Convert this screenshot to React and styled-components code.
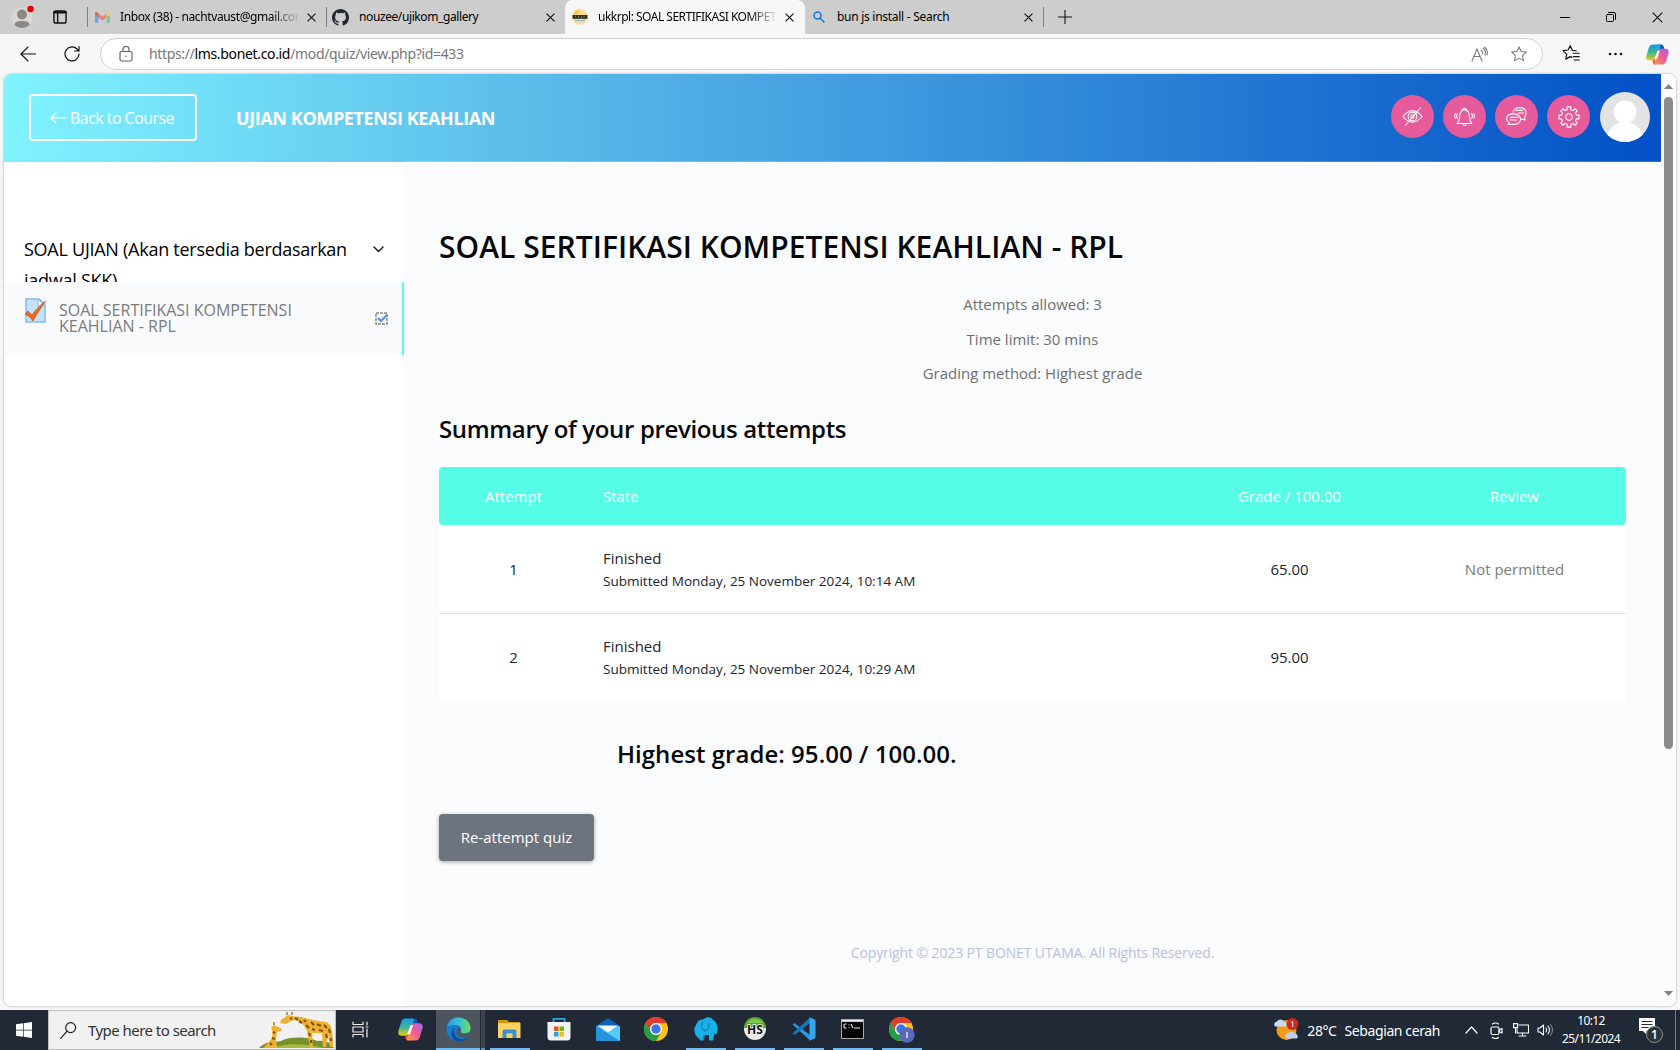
import React from "react";
import styled, { createGlobalStyle } from "styled-components";

const Global = createGlobalStyle`
  *{box-sizing:border-box}
  body{margin:0;background:#f7f7f7;overflow:hidden;font-family:"Open Sans","Noto Sans",sans-serif;color:#000}
  svg{display:block;flex:none}
`;
const ui = `"Noto Sans","Open Sans",sans-serif`;

const Screen = styled.div`width:1680px;height:1050px;display:flex;flex-direction:column;background:#f7f7f7;`;

/* Tab strip */
const TabStrip = styled.div`height:34px;flex:none;background:#cdcdcd;display:flex;align-items:stretch;font-family:${ui};`;
const StripTools = styled.div`width:87px;display:flex;align-items:center;padding-left:11px;gap:19px;`;
const Tab = styled.div`
  width:${p => p.$w}px;display:flex;align-items:center;padding:0 ${p => p.$pr}px 0 ${p => p.$pl}px;
  background:${p => (p.$active ? "#f7f7f7" : "transparent")};
  border-radius:${p => (p.$active ? "8px 8px 0 0" : "0")};
`;
const TabLabel = styled.div`
  flex:1;margin:0 7px 0 ${p => p.$gap || 10}px;font-size:12px;letter-spacing:${p => p.$ls || 0}px;white-space:nowrap;overflow:hidden;line-height:20px;
  mask-image:${p => (p.$fade ? "linear-gradient(90deg,#000 84%,transparent)" : "none")};
`;
const Divider = styled.div`width:1px;height:20px;margin-top:7px;background:#808080;flex:none;`;
const WindowControls = styled.div`margin-left:auto;display:flex;align-items:center;gap:36px;padding-right:17px;`;

/* Address bar */
const Toolbar = styled.div`height:40px;flex:none;display:flex;align-items:center;background:#f7f7f7;padding:0 11px 0 20px;`;
const NavIcons = styled.div`display:flex;align-items:center;gap:28px;width:80px;`;
const AddressBar = styled.div`
  width:1444px;height:32px;border:1px solid #d0d0d0;border-radius:16px;background:#fff;display:flex;align-items:center;padding:0 14px 0 18px;
`;
const Url = styled.div`margin-left:16px;flex:1;font-family:${ui};font-size:14px;line-height:22px;letter-spacing:${p => p.$ls}px;color:#767676;b{font-weight:400;color:#000}`;
const AddressIcons = styled.div`display:flex;gap:22px;align-items:center;`;
const BrowserIcons = styled.div`margin-left:19px;display:flex;align-items:center;flex:1;`;
const IconSlot = styled.div`margin-left:${p => p.$ml || 0}px;`;

/* Page */
const PageFrame = styled.div`
  margin:0 4px 4px;height:932px;flex:none;display:flex;border-radius:8px;overflow:hidden;background:#fff;box-shadow:0 0 3px rgba(0,0,0,.3);
`;
const Site = styled.div`width:1657px;display:flex;flex-direction:column;`;
const Header = styled.header`
  height:88px;flex:none;display:flex;align-items:center;padding:0 11px 0 25px;
  background:linear-gradient(90deg,#80f3ff 0%,#57b7e8 35%,#0250c5 100%);border-bottom:1px solid rgba(255,255,255,.2);
`;
const BackButton = styled.div`
  width:168px;height:47px;border:2px solid #fff;border-radius:4px;color:#fff;display:flex;align-items:center;padding-left:19px;gap:4px;
  font-size:16px;letter-spacing:-.54px;white-space:nowrap;
`;
const CourseName = styled.div`margin-left:39px;color:#fff;font-weight:700;font-size:18px;letter-spacing:${p => p.$ls}px;white-space:nowrap;`;
const HeaderIcons = styled.div`margin:0 0 2px auto;display:flex;gap:9px;align-items:center;`;
const Round = styled.div`width:43px;height:43px;border-radius:50%;background:#e55b9b;display:flex;align-items:center;justify-content:center;`;
const Avatar = styled.div`margin-left:1px;`;
const Columns = styled.div`flex:1;display:flex;min-height:0;`;
const Sidebar = styled.aside`width:400px;background:#fff;padding-top:72px;box-shadow:0 0 3px rgba(0,0,0,.12);`;
const SectionTitle = styled.div`height:48px;overflow:hidden;padding:0 20px;display:flex;justify-content:space-between;`;
const SectionText = styled.div`font-size:18px;line-height:31px;letter-spacing:${p => p.$ls}px;width:335px;`;
const ChevronBox = styled.div`height:31px;display:flex;align-items:center;`;
const Activity = styled.div`
  height:73px;background:#f9fafc;border-right:2px solid #55fde6;display:flex;padding:16px 14px 0 20px;
`;
const ActivityText = styled.div`margin:4px 0 0 11px;font-size:16px;line-height:16px;color:#7b7b7b;width:290px;letter-spacing:${p => p.$ls}px;`;
const CheckBox = styled.div`margin:14px 0 0 auto;`;

const Main = styled.main`flex:1;background:#f9fbfd;padding:67px 35px 0;display:flex;flex-direction:column;`;
const Title = styled.h1`margin:0;font-size:30px;line-height:36px;font-weight:600;letter-spacing:${p => p.$ls}px;color:#070709;white-space:nowrap;`;
const Info = styled.div`margin-top:22px;color:#707070;font-size:15px;text-align:center;letter-spacing:${p => p.$ls}px;`;
const InfoLine = styled.div`line-height:34.500px;`;
const Subtitle = styled.h2`
  margin:${p => p.$mt}px 0 0 ${p => p.$ml || 0}px;font-size:24px;line-height:32px;font-weight:600;letter-spacing:${p => p.$ls}px;color:#070709;white-space:nowrap;
`;
const Table = styled.div`margin-top:22px;color:#212529;font-size:15px;`;
const Row = styled.div`
  display:grid;grid-template-columns:149px 588px 227px 223px;align-items:center;background:#fff;height:${p => p.$h}px;
  border-top:${p => (p.$line ? "1px solid #dee2e6" : "0")};
`;
const HeadRow = styled(Row)`height:58px;background:#55fde6;color:#fff;border-radius:4px;`;
const Cell = styled.div`text-align:${p => (p.$left ? "left" : "center")};padding-left:${p => (p.$left ? 15 : 0)}px;color:${p => (p.$muted ? "#7b7b7b" : "inherit")};`;
const StateName = styled.div`line-height:23px;padding-top:2px;`;
const StateDate = styled.div`line-height:23px;font-size:13.500px;`;
const Retry = styled.div`
  margin-top:44px;width:155px;height:47px;border-radius:4px;background:#6c757d;color:#fff;font-size:15px;display:flex;align-items:center;justify-content:center;
  box-shadow:0 1px 4px rgba(0,0,0,.35);
`;
const Footer = styled.footer`margin-top:80px;text-align:center;font-size:14px;line-height:24px;color:#b9c0dd;letter-spacing:${p => p.$ls}px;`;
const ScrollTrack = styled.div`width:15px;background:#fcfcfc;display:flex;flex-direction:column;align-items:center;padding:10px 0 10px;`;
const Thumb = styled.div`width:9px;height:652px;border-radius:5px;background:#8b8b8b;margin:8px 0 auto;`;

/* Taskbar */
const Taskbar = styled.div`height:40px;flex:none;background:#212936;display:flex;align-items:stretch;font-family:${ui};color:#fff;`;
const Start = styled.div`width:48px;display:flex;align-items:center;justify-content:center;`;
const Search = styled.div`
  width:288px;background:#f1f1f1;border:1px solid #bdbdbd;color:#333;display:flex;align-items:center;padding-left:11px;font-size:15px;
`;
const SearchText = styled.div`margin-left:11px;flex:1;letter-spacing:${p => p.$ls}px;white-space:nowrap;`;
const TaskButton = styled.div`
  width:${p => p.$w || 49}px;display:flex;flex-direction:column;align-items:center;background:${p => (p.$active ? "#4d555f" : "transparent")};
`;
const TaskIcon = styled.div`flex:1;display:flex;align-items:center;justify-content:center;`;
const RunMark = styled.div`height:2px;width:${p => (p.$full ? "100%" : "40px")};background:${p => (p.$on ? "#76b9ed" : "transparent")};`;
const StackEdge = styled.div`width:4px;margin:0 0 0 1px;background:#3b434e;border-bottom:2px solid #5e93bd;`;
const Tray = styled.div`margin-left:auto;display:flex;align-items:center;`;
const Weather = styled.div`display:flex;align-items:center;gap:8px;font-size:14px;letter-spacing:${p => p.$ls}px;white-space:nowrap;margin-right:25px;`;
const TrayIcons = styled.div`display:flex;align-items:center;gap:10px;`;
const Clock = styled.div`width:64px;margin-left:6px;text-align:center;font-size:12px;line-height:18px;letter-spacing:${p => p.$ls}px;white-space:nowrap;`;
const Notice = styled.div`margin:0 12px 0 15px;`;
const Peek = styled.div`width:5px;height:40px;border-left:1px solid #79808a;`;

const X = ({ s = 9, w = 1.3 }) => (
  <svg width={s} height={s} viewBox="0 0 10 10"><path d="M.6.6l8.8 8.8M9.4.6L.6 9.4" stroke="#111" strokeWidth={w} /></svg>
);
const Line = ({ w = 18, h = w, vb = "0 0 24 24", c = "#222", sw = 1.5, children }) => (
  <svg width={w} height={h} viewBox={vb} fill="none" stroke={c} strokeWidth={sw} strokeLinecap="round" strokeLinejoin="round">{children}</svg>
);
const Profile = () => (
  <svg width="23" height="24" viewBox="0 0 23 24">
    <circle cx="11" cy="13" r="10.5" fill="#dad8d5" /><circle cx="11" cy="9.5" r="5" fill="#8b8886" />
    <path d="M3.5 20c0-3 2.500-4 7.500-4s7.500 1 7.500 4c-4 4-11 4-15 0z" fill="#8b8886" />
    <circle cx="19.500" cy="4" r="3.200" fill="#e60000" />
  </svg>
);
const Workspaces = () => (
  <Line w={14} vb="0 0 15 15" sw={1.5} c="#111"><rect x="1" y="1" width="13" height="13" rx="2" /><path d="M1.500 2.500h12" strokeWidth="2.500" /><path d="M5 4v10" /></Line>
);
const Gmail = () => (
  <svg width="15" height="11" viewBox="0 0 30 22">
    <path d="M0 3v17a2 2 0 0 0 2 2h5V9z" fill="#7aa3e5" /><path d="M30 3v17a2 2 0 0 1-2 2h-5V9z" fill="#86c49a" />
    <path d="M7 3l8 6 8-6v8l-8 6-8-6z" fill="#e7807a" /><path d="M0 3c0-3 3-4 5-2l2 2v8L0 6z" fill="#cf6862" /><path d="M30 3c0-3-3-4-5-2l-2 2v8l7-5z" fill="#f0cb66" />
  </svg>
);
const GitHub = () => (
  <svg width="17" height="17" viewBox="0 0 16 16" fill="#24292f"><path d="M8 0C3.580 0 0 3.580 0 8c0 3.540 2.290 6.530 5.470 7.590.4.070.55-.17.55-.38 0-.19-.01-.82-.01-1.490-2.010.37-2.530-.49-2.690-.94-.09-.23-.48-.94-.82-1.130-.28-.15-.68-.52-.01-.53.63-.01 1.080.58 1.230.82.72 1.210 1.870.87 2.330.66.07-.52.28-.87.51-1.070-1.780-.2-3.640-.89-3.640-3.950 0-.87.31-1.590.82-2.150-.08-.2-.36-1.020.08-2.120 0 0 .67-.21 2.200.82.64-.18 1.320-.27 2-.27s1.360.09 2 .27c1.530-1.040 2.200-.82 2.200-.82.44 1.100.16 1.920.08 2.120.51.56.82 1.270.82 2.150 0 3.070-1.870 3.750-3.650 3.950.29.25.54.73.54 1.480 0 1.070-.01 1.930-.01 2.200 0 .21.15.46.55.38A8.010 8.010 0 0 0 16 8c0-4.420-3.580-8-8-8z" /></svg>
);
const Bonet = () => (
  <svg width="16" height="16" viewBox="0 0 16 16"><circle cx="8" cy="8" r="7.800" fill="#fae08a" /><path d="M1 6a7 7 0 0 1 7-5.800L6 5z" fill="#f3c94c" /><path d="M3 11.500h10" stroke="#9fb4c4" /><path d="M5 13.500h6" stroke="#e8d9b0" /><path d="M.5 6h15v3.800H.5z" fill="#2b3230" /><path d="M3.500 6.800v1M6.500 7v1.500M9.500 7.500v1.500M12 7v1" stroke="#bca64f" strokeWidth=".8" /></svg>
);
const Copilot = ({ s = 23 }) => (
  <svg width={s} height={s} viewBox="0 0 24 24">
    <defs>
      <linearGradient id="cpa" x1="0" y1="0" x2="0" y2="1"><stop offset="0" stopColor="#159be8" /><stop offset=".5" stopColor="#38b897" /><stop offset="1" stopColor="#f2c80a" /></linearGradient>
      <linearGradient id="cpb" x1="1" y1="0" x2="0" y2="1"><stop offset="0" stopColor="#a561f0" /><stop offset=".5" stopColor="#ef5b92" /><stop offset="1" stopColor="#ff9a52" /></linearGradient>
    </defs>
    <path d="M12 1.500h4c2 0 2.500 2 3 4l.5 2h-5z" fill="#1451c8" />
    <path d="M7 1.500h6.500c1.500 0 2 1 1.500 2.500l-4 12c-.5 1.500-1.500 2-3 2H3.500C.5 18-.3 15.500.5 13L3 5c.8-2.500 2-3.500 4-3.500z" fill="url(#cpa)" />
    <path d="M7 18l2-.5 2 5H9c-1.500 0-2-2-2-4.500z" fill="#e75a3b" />
    <path d="M17 22.500h-6.500c-1.500 0-2-1-1.500-2.500l4-12c.5-1.500 1.500-2 3-2h4.500c3 0 3.800 2.500 3 5l-2.500 8c-.8 2.500-2 3.500-4 3.500z" fill="url(#cpb)" />
    <path d="M12 8h2.500l-3 8.500H8.800z" fill="#fff" />
  </svg>
);
const star = "M12 2.500l2.900 6.200 6.800.8-5 4.600 1.300 6.700-6-3.300-6 3.300 1.300-6.700-5-4.600 6.800-.8z";
const Quiz = () => (
  <svg width="24" height="25" viewBox="0 0 24 25">
    <path d="M2 1h13l6 6v17H2z" fill="#c3e4f8" stroke="#8ab6ef" strokeWidth="1.500" /><path d="M14 1v7h7z" fill="#f0f9ff" stroke="#8ab6ef" />
    <path d="M1 16l3-3 4 4C12 11 17 6 22 3c-5 6-9 13-13 20-2-3-4-5-8-7z" fill="#ed691c" stroke="#bf4c10" strokeWidth=".6" />
  </svg>
);
const Edge = () => (
  <svg width="25" height="25" viewBox="0 0 24 24">
    <defs><linearGradient id="ed" x1="0" y1="0" x2="1" y2="0"><stop stopColor="#2b94df" /><stop offset=".5" stopColor="#35c1d8" /><stop offset="1" stopColor="#70de55" /></linearGradient></defs>
    <circle cx="12" cy="12" r="11.500" fill="#167bd1" />
    <path d="M.6 11C1.500 4.500 6 .5 12 .5c7 0 11.500 5 11.500 10 0 4-3 5.500-6 5.500-2.500 0-4-.8-3.500-1.800 1.500-3 .2-5.700-4-6.400C5.500 7 2 8.500.6 11z" fill="url(#ed)" />
    <path d="M8.500 10c-2.500 6 1.500 11.500 8 11 2-.2 4-1.200 5-2.300-2 4-7 5-10.500 4.700C4 22 3.500 13 8.500 10z" fill="#0d4d9d" />
    <path d="M14 14.200c-.8 1.600 4 2.600 7.500.7 1.200-.5 1.500 1.500.2 3-2 2-9 3.500-11.500-1.500-1-2.400.3-5.600 2.300-6.200 2 1 2 2.400 1.500 4z" fill="#4d555f" />
  </svg>
);
const Folder = () => (
  <svg width="23" height="20" viewBox="0 0 23 20"><path d="M0 1h9l2 2h11v5H0z" fill="#d9980b" /><path d="M0 4h22.500v15H0z" fill="#fcd265" /><path d="M4.500 19v-6.500a2 2 0 0 1 2-2h10a2 2 0 0 1 2 2V19h-4v-4.500h-6V19z" fill="#3c91d4" /></svg>
);
const Store = () => (
  <svg width="24" height="24" viewBox="0 0 24 24"><path d="M6.500 6V1.800h11V6" stroke="#2ea4e2" strokeWidth="1.800" fill="none" /><path d="M.5 5h23v15a3.500 3.500 0 0 1-3.500 3.500H4A3.500 3.500 0 0 1 .5 20z" fill="#f2f2f2" /><path d="M7 9.500h4.500V14H7z" fill="#f1511b" /><path d="M12.500 9.500H17V14h-4.500z" fill="#6fb61f" /><path d="M7 15h4.500v4.500H7z" fill="#2aa2e4" /><path d="M12.500 15H17v4.500h-4.500z" fill="#fbb90d" /></svg>
);
const Mail = () => (
  <svg width="24" height="23" viewBox="0 0 24 23"><path d="M0 8l12-8 12 8z" fill="#0a63b9" /><path d="M0 8h24v15H0z" fill="#3cbcf1" /><path d="M2 7.500h20L12 15z" fill="#f5f9fc" /><path d="M0 8l24 15H0z" fill="#2592db" /><path d="M24 8L11 14.700 24 23z" fill="#53ccf7" /></svg>
);
const Chrome = ({ badge }) => (
  <svg width="27" height="27" viewBox="0 0 27 27">
    <circle cx="13" cy="13" r="12" fill="#fbc116" />
    <path d="M2.600 7A12 12 0 0 1 23.400 7H13a6 6 0 0 0-5.200 9z" fill="#e33b2e" />
    <path d="M2.600 7A12 12 0 0 0 13 25l5.200-9a6 6 0 0 1-10.400 0z" fill="#229e49" />
    <circle cx="13" cy="13" r="6" fill="#fff" /><circle cx="13" cy="13" r="4.700" fill="#3978e8" />
    {badge && <><circle cx="19" cy="19" r="7.700" fill="#5b69bc" /><path d="M19 16v6" stroke="#d9dcf0" strokeWidth="1.600" /></>}
  </svg>
);
const Elephant = () => (
  <svg width="24" height="24" viewBox="0 0 24 24">
    <path d="M3 6C5 2 8 3 10 2c3-3 8-2 9 1 4 2 5 7 4.500 11l-1.500 4-1.500-2-1.500 7.500h-4V18h-5l-.5 5.500H6L5.500 22C1 19 0 14 .5 11z" fill="#19b2e8" />
    <path d="M9 4c-3 5-1 9 2 10 3-1 4-4 4-8M4 9.500h.8M10.500 18l-.8 4" stroke="#0a7fae" strokeWidth="1.100" fill="none" />
  </svg>
);
const Heidi = () => (
  <svg width="24" height="24" viewBox="0 0 24 24"><circle cx="12" cy="12" r="11" fill="#e7e9e6" /><path d="M1 11a11 11 0 0 1 22 0z" fill="#5aa52f" /><path d="M4 6a10 10 0 0 1 16 0z" fill="#82c653" /><text x="12" y="16.500" textAnchor="middle" fontFamily="Open Sans" fontWeight="700" fontSize="12" fill="#111" stroke="#fff" strokeWidth="1.500" paintOrder="stroke">HS</text></svg>
);
const Code = () => (
  <svg width="24" height="24" viewBox="0 0 24 24"><path d="M.5 7.500L2.500 6 18 18v5.500z" fill="#2795db" /><path d="M.5 16.500L2.500 18 18 6V.5z" fill="#1677bb" /><path d="M17.500.3L23.500 3v18l-6 2.700z" fill="#36a6ee" /></svg>
);
const Terminal = () => (
  <svg width="23" height="20" viewBox="0 0 23 20"><path d="M0 0h23v20H0z" fill="#aaa" /><path d="M1 3h21v16H1z" fill="#050505" /><path d="M1 1h21v1.500H1z" fill="#e8e8e8" /><path d="M5.500 5H4q-1 0-1 1v2q0 1 1 1h1.500M8 5.500v.8M8 8.200v.8M10 5l2 4M13 9h6" stroke="#eee" fill="none" strokeWidth="1.100" /></svg>
);
const Giraffes = () => (
  <svg width="76" height="36" viewBox="0 0 76 36">
    <path d="M0 36C8 28 15 31 22 29c10-5 28-4 36 0 9-1 14 2 17 7z" fill="#75912d" /><path d="M15 36c10-5 30-5 50 0z" fill="#a5bd3a" />
    <g fill="#edb22f"><path d="M29 3l4 1 9 1c8 2 15 4 25 5 6 2 7 10 7 25h-3l-2-13-2 13h-3l-1-14H53l1 15h-3l-3-17c-3-6-7-12-13-11l-9 4-5-1 1-3z" /><path d="M15 13l4 2 4 2-1 2-4 1-1 8c0 4 2 6 1 8H4l5-5 4-5c1-5 0-9-1-11z" /></g>
    <path d="M31 6l2 1M36 6l3 2M40 9l3 2M45 8l2 2M47 13l3 3M52 10l3 3M58 12l4 2M65 13l3 3M53 17l3 1M60 18l4 1M70 17l1 4M50 21l1 3M67 22l1 4M14 20l2 1M13 26l3 1M11 31l2 2M52 28v3M72 26v3" stroke="#8c4f12" strokeWidth="2.200" />
    <path d="M28 3V0M33 3V0M15 13v-3" stroke="#6b3c12" />
  </svg>
);

const Task = ({ w, active, run, children }) => (
  <TaskButton $w={w} $active={active}><TaskIcon>{children}</TaskIcon><RunMark $full={active} $on={active || run} /></TaskButton>
);

export default function App() {
  return (
    <><Global />
      <Screen>
        <TabStrip>
          <StripTools><Profile /><Workspaces /></StripTools>
          <Divider />
          <Tab $w={238} $pl={7} $pr={10}><Gmail /><TabLabel $fade $ls={-0.38}>Inbox (38) - nachtvaust@gmail.com</TabLabel><X /></Tab>
          <Divider />
          <Tab $w={238} $pl={5} $pr={10}><GitHub /><TabLabel $ls={-0.4}>nouzee/ujikom_gallery</TabLabel><X /></Tab>
          <Tab $w={240} $pl={7} $pr={11} $active><Bonet /><TabLabel $fade $ls={-0.5}>ukkrpl: SOAL SERTIFIKASI KOMPETENSI</TabLabel><X /></Tab>
          <Tab $w={238} $pl={8} $pr={10}><Line w={12} c="#1a76d2" sw={3}><circle cx="9" cy="9" r="7" /><path d="M14 14l8 8" /></Line><TabLabel $gap={12} $ls={-0.28}>bun js install - Search</TabLabel><X /></Tab>
          <Divider />
          <Tab $w={40} $pl={14} $pr={0}><Line w={14} vb="0 0 14 14" sw={1.1} c="#111"><path d="M7 0v14M0 7h14" /></Line></Tab>
          <WindowControls>
            <Line w={10} vb="0 0 10 10" sw={1} c="#000"><path d="M0 5.500h10" /></Line>
            <Line w={10} vb="0 0 10 10" sw={1} c="#000"><rect x=".5" y="2.500" width="7" height="7" rx="1" /><path d="M2.500.5H8A1.500 1.500 0 0 1 9.500 2v5.500" /></Line>
            <X s={11} w={1} />
          </WindowControls>
        </TabStrip>
        <Toolbar>
          <NavIcons>
            <Line w={16} vb="0 0 16 16" sw={1.1} c="#111"><path d="M15.500 8H1M8 1L1 8l7 7" /></Line>
            <Line w={16} vb="0 0 16 16" sw={1.2} c="#111"><path d="M15 8a7 7 0 1 1-2-5l2 2M15 .5V5h-4.500" /></Line>
          </NavIcons>
          <AddressBar>
            <Line w={14} h={16} vb="0 0 14 16" sw={1.2} c="#666"><rect x="1" y="5.500" width="12" height="9.500" rx="1.500" /><path d="M4 5.500V3.500a3 3 0 0 1 6 0v2M7 10v.5" /></Line>
            <Url $ls={-0.34}>https://<b>lms.bonet.co.id</b>/mod/quiz/view.php?id=433</Url>
            <AddressIcons>
              <Line w={17} vb="0 0 17 17" sw={1.1} c="#777"><path d="M1 15L6 3l5 12M3 10.500h6M10 4q2 1.500 1.500 4M12 2q3.500 2.500 2 7M13.500 1q4 3 2.500 8" /></Line>
              <Line w={18} c="#777" sw={1.4}><path d={star} /></Line>
            </AddressIcons>
          </AddressBar>
          <BrowserIcons>
            <IconSlot><Line w={18} vb="0 0 24 24" c="#111" sw={1.6}><path d="M13 16.500l-2-1-6 3.300 1.300-6.700-5-4.600 6.800-.8L11 1l2.900 6.200 5 .5M15 11h8M15 15.500h8M16 20h7" /></Line></IconSlot>
            <IconSlot $ml={28}><Line w={15} h={4} vb="0 0 15 4" c="#111" sw={2.600}><path d="M2 2h.01M7.500 2h.01M13 2h.01" /></Line></IconSlot>
            <IconSlot $ml={23}><Copilot /></IconSlot>
          </BrowserIcons>
        </Toolbar>
        <PageFrame>
          <Site>
            <Header>
              <BackButton><Line w={16} h={12} vb="0 0 16 12" c="#fff" sw={1.2}><path d="M15.500 6H1M6 1L1 6l5 5" /></Line>Back to Course</BackButton>
              <CourseName $ls={-0.4}>UJIAN KOMPETENSI KEAHLIAN</CourseName>
              <HeaderIcons>
                <Round><Line w={21} c="#fff" sw={1.2}><path d="M1 12q11-13 22 0-11 13-22 0zM4 22L21 2" /><circle cx="12" cy="12" r="5" /><circle cx="12" cy="12" r="2" /></Line></Round>
                <Round><Line w={21} c="#fff" sw={1.2}><path d="M3.500 20c2-2 3-3 3-8 0-5 2-7.500 5.500-7.500s5.500 2.500 5.500 7.500c0 5 1 6 3 8zM9 5q3-5 6 0M9.500 20q2.500 5 5 0M4 8.500q-2 3 0 6M1.500 9q-1.500 2.500 0 5M20 8.500q2 3 0 6M22.500 9q1.500 2.500 0 5" /></Line></Round>
                <Round><Line w={21} c="#fff" sw={1.2}><path d="M8 7c1-7 15-7 15 1 0 3-1 4-2 5l1 3-4-1M11 5h8M14 8h6M4 19l-2 2h8c9 0 9-12-1-12s-10 7-5 10zM5 13h9M5 16h7" /></Line></Round>
                <Round><Line w={22} c="#fff" sw={1.2}><path d="M10 1h4v3l2.500 1 2-2L21 5.500l-2 2 1 2.500h3v4h-3l-1 2.500 2 2-2.500 2.500-2-2-2.500 1v3h-4v-3l-2.500-1-2 2L3 18.500l2-2L4 14H1v-4h3l1-2.500-2-2L5.500 3l2 2L10 4z" /><circle cx="12" cy="12" r="3.500" /></Line></Round>
                <Avatar><svg width="50" height="50" viewBox="0 0 50 50"><defs><clipPath id="av"><circle cx="25" cy="25" r="25" /></clipPath></defs><g clipPath="url(#av)"><path d="M0 0h50v50H0z" fill="#e3e3e3" /><circle cx="25" cy="20" r="11.500" fill="#fff" /><ellipse cx="25" cy="47" rx="18" ry="17" fill="#fff" /></g></svg></Avatar>
              </HeaderIcons>
            </Header>
            <Columns>
              <Sidebar>
                <SectionTitle><SectionText $ls={-0.26}>SOAL UJIAN (Akan tersedia berdasarkan jadwal SKK)</SectionText><ChevronBox><Line w={11} h={7} vb="0 0 11 7" c="#111" sw={1.4}><path d="M1 1l4.500 4.500L10 1" /></Line></ChevronBox></SectionTitle>
                <Activity>
                  <Quiz /><ActivityText $ls={0}>SOAL SERTIFIKASI KOMPETENSI<br />KEAHLIAN - RPL</ActivityText>
                  <CheckBox><svg width="13" height="13" viewBox="0 0 13 13"><rect x="1" y="1" width="11" height="11" fill="none" stroke="#888" strokeWidth="1.500" strokeDasharray="3 1" /><path d="M3 6l3 3 6-6" stroke="#5b8def" strokeWidth="2.200" fill="none" /></svg></CheckBox>
                </Activity>
              </Sidebar>
              <Main>
                <Title $ls={0.04}>SOAL SERTIFIKASI KOMPETENSI KEAHLIAN - RPL</Title>
                <Info $ls={0}><InfoLine>Attempts allowed: 3</InfoLine><InfoLine>Time limit: 30 mins</InfoLine><InfoLine>Grading method: Highest grade</InfoLine></Info>
                <Subtitle $mt={22} $ls={-0.35}>Summary of your previous attempts</Subtitle>
                <Table>
                  <HeadRow><Cell>Attempt</Cell><Cell $left>State</Cell><Cell>Grade / 100.00</Cell><Cell>Review</Cell></HeadRow>
                  <Row $h={88}><Cell>1</Cell><Cell $left><StateName>Finished</StateName><StateDate>Submitted Monday, 25 November 2024, 10:14 AM</StateDate></Cell><Cell>65.00</Cell><Cell $muted>Not permitted</Cell></Row>
                  <Row $h={88} $line><Cell>2</Cell><Cell $left><StateName>Finished</StateName><StateDate>Submitted Monday, 25 November 2024, 10:29 AM</StateDate></Cell><Cell>95.00</Cell><Cell /></Row>
                </Table>
                <Subtitle $mt={37} $ml={178} $ls={0.03}>Highest grade: 95.00 / 100.00.</Subtitle>
                <Retry>Re-attempt quiz</Retry>
                <Footer $ls={-0.12}>Copyright © 2023 PT BONET UTAMA. All Rights Reserved.</Footer>
              </Main>
            </Columns>
          </Site>
          <ScrollTrack>
            <svg width="9" height="5" viewBox="0 0 9 5"><path d="M0 5L4.500 0 9 5z" fill="#808080" /></svg>
            <Thumb />
            <svg width="9" height="5" viewBox="0 0 9 5"><path d="M0 0h9L4.500 5z" fill="#808080" /></svg>
          </ScrollTrack>
        </PageFrame>
        <Taskbar>
          <Start><svg width="16" height="16" viewBox="0 0 16 16" fill="#fff"><path d="M0 2.300L7 1.300v6.400H0zM7.700 1.200L16 0v7.700H7.700zM0 8.400h7v6.400L0 13.800zM7.700 8.400H16V16l-8.300-1.200z" /></svg></Start>
          <Search><Line w={17} c="#222" sw={1.700}><circle cx="15" cy="8" r="7" /><path d="M10 13L1 23" /></Line><SearchText $ls={-0.54}>Type here to search</SearchText><Giraffes /></Search>
          <Task w={48}><Line w={17} vb="0 0 17 17" c="#eee" sw={1.200}><path d="M1 1v2.500h10V1M1 16v-2.500h10V16M1 6h10v5H1zM15 1v3M15 8v8M14 6h2" /></Line></Task>
          <Task w={52}><Copilot s={25} /></Task>
          <Task w={44} active><Edge /></Task>
          <StackEdge />
          <Task run><Folder /></Task>
          <Task><Store /></Task>
          <Task><Mail /></Task>
          <Task><Chrome /></Task>
          <Task run><Elephant /></Task>
          <Task run><Heidi /></Task>
          <Task run><Code /></Task>
          <Task run><Terminal /></Task>
          <Task run><Chrome badge /></Task>
          <Tray>
            <Weather $ls={-0.4}>
              <svg width="25" height="24" viewBox="0 0 25 24"><circle cx="12.500" cy="12" r="10" fill="#f59a1b" /><path d="M1 8.500a3 3 0 0 1 2-5 4 4 0 0 1 7 0 3 3 0 0 1 2 5z" fill="#c7dcf8" /><path d="M12 20.500a3 3 0 0 1 2-5 4 4 0 0 1 7 0 3 3 0 0 1 2 5z" fill="#b9d2f5" /><circle cx="18.500" cy="6" r="6" fill="#c92a23" /><path d="M17 4.500l1.700-1V9" stroke="#fff" fill="none" /></svg>
              <span>28°C</span><span>Sebagian cerah</span>
            </Weather>
            <TrayIcons>
              <Line w={13} h={8} vb="0 0 13 8" c="#fff" sw={1.200}><path d="M1 7l5.500-6L12 7" /></Line>
              <IconSlot $ml={2}><Line w={13} h={17} vb="0 0 13 17" c="#fff" sw={1.200}><rect x="1" y="5" width="8" height="7.500" rx="1.500" /><path d="M9 8l3-1.500v4.500L9 9.500M2.500 2q3-2 6 0M2.500 15.500q3 2 6 0" /></Line></IconSlot>
              <Line w={16} h={14} vb="0 0 16 14" c="#fff" sw={1.100}><path d="M6 2h9.500v8H4V6M9.500 10v3M6 13h7M.6.600h4v4h-4zM2.500 5v5" /></Line>
              <IconSlot $ml={-2}><Line w={16} h={14} vb="0 0 16 14" c="#fff" sw={1.100}><path d="M1 5v4h2l3.500 3V2L3 5zM9 5q1.500 2 0 4M11 3q3 4 0 8" /><path d="M13.500 1.500q4 5.500 0 11" stroke="#7c828b" /></Line></IconSlot>
            </TrayIcons>
            <Clock $ls={-0.6}>10:12<br />25/11/2024</Clock>
            <Notice><svg width="25" height="26" viewBox="0 0 25 26"><path d="M1 1h16v13H8.500v3.500L5 14H1z" fill="#fff" /><path d="M3.500 4.500h11M3.500 7.500h11M3.500 10.500h7" stroke="#212936" /><circle cx="16.500" cy="17.500" r="8" fill="#2e3339" stroke="#8d9196" /><text x="16.500" y="22" textAnchor="middle" fontFamily="Open Sans" fontWeight="600" fontSize="12" fill="#fff">1</text></svg></Notice>
            <Peek />
          </Tray>
        </Taskbar>
      </Screen>
    </>
  );
}
